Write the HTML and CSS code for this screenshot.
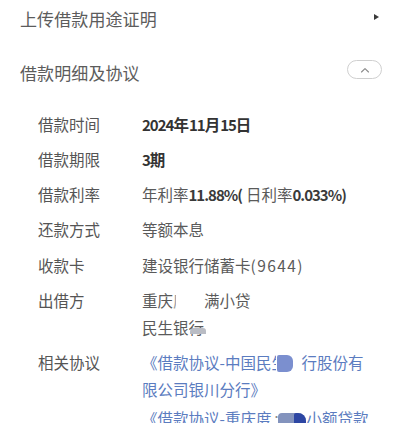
FILE: index.html
```html
<!DOCTYPE html>
<html lang="zh-CN">
<head>
<meta charset="utf-8">
<link rel="stylesheet" href="styles.css">
</head>
<body>
<div class="page">
  <div class="head-row">
    <span class="head-title">上传借款用途证明</span>
    <span class="tri"></span>
  </div>
  <div class="head-row second">
    <span class="head-title">借款明细及协议</span>
    <span class="pill">
      <svg width="10" height="6" viewBox="0 0 10 6"><path d="M1.5 5 L5 1.6 L8.5 5" fill="none" stroke="#8a8a8a" stroke-width="1.1" stroke-linecap="round" stroke-linejoin="round"/></svg>
    </span>
  </div>
  <div class="details">
    <div class="label">借款时间</div>
    <div class="value strong"><span class="num">2024</span>年<span class="num">11</span>月<span class="num">15</span>日</div>

    <div class="label">借款期限</div>
    <div class="value strong"><span class="num">3</span>期</div>

    <div class="label">借款利率</div>
    <div class="value">年利率<b class="num">11.88%(</b><span class="sp"></span>日利率<b class="num">0.033%)</b></div>

    <div class="label">还款方式</div>
    <div class="value">等额本息</div>

    <div class="label">收款卡</div>
    <div class="value">建设银行储蓄卡<span class="wide">(9644)</span></div>

    <div class="label">出借方</div>
    <div class="value">
      <div class="line">重庆<span class="frag">度</span><span class="gap-a"></span>满小贷</div>
      <div class="line">民生银<span class="smudged">行<span class="smudge"></span></span></div>
    </div>

    <div class="label">相关协议</div>
    <div class="value link">
      <div class="line">《借款协议-中国民<span class="frag2">生</span><span class="blob-a"></span>行股份有</div>
      <div class="line">限公司银川分行》</div>
      <div class="line">《借款协议-重庆度<span class="dot">·</span><span class="blob-b"><span class="blob-b2"></span></span>小额贷款</div>
    </div>
  </div>
</div>
</body>
</html>
```

FILE: styles.css
```css
html, body {
  margin: 0;
  padding: 0;
  background: #ffffff;
}
body {
  font-family: "Noto Sans CJK SC", "Noto Sans", sans-serif;
  color: #555555;
  width: 400px;
  height: 423px;
  overflow: hidden;
}
.page {
  display: flex;
  flex-direction: column;
}
.head-row {
  height: 36px;
  display: flex;
  align-items: center;
  justify-content: space-between;
  padding: 0 21px 0 20px;
}
.head-row.second {
  margin-top: 18px;
  padding-right: 18px;
}
.head-title {
  font-size: 17px;
  color: #5c5c5c;
  letter-spacing: 0.1px;
}
.tri {
  width: 0;
  height: 0;
  border-top: 3px solid transparent;
  border-bottom: 3px solid transparent;
  border-left: 5px solid #3a3a3a;
  margin-bottom: 2px;
}
.pill {
  width: 33px;
  height: 17px;
  border: 1px solid #cfcfcf;
  border-radius: 10px;
  display: flex;
  align-items: center;
  justify-content: center;
  margin-bottom: 5px;
}
.pill svg {
  display: block;
}
.details {
  display: grid;
  grid-template-columns: 104px 1fr;
  row-gap: 8.3px;
  padding: 20.5px 0 0 38px;
  font-size: 15.5px;
  line-height: 27px;
}
.label {
  color: #555555;
}
.value {
  color: #5a5a5a;
}
.value.strong {
  color: #333333;
  font-weight: 600;
}
.num {
  font-size: 15px;
  letter-spacing: -1px;
}
.value b {
  font-weight: 600;
  color: #3a3a3a;
}
.sp {
  display: inline-block;
  width: 4px;
}
.wide {
  letter-spacing: 1.4px;
}
.line {
  white-space: nowrap;
}
.frag {
  display: inline-block;
  width: 3px;
  overflow: hidden;
  vertical-align: top;
  color: #9a9a9a;
}
.gap-a {
  display: inline-block;
  width: 28px;
}
.smudged {
  position: relative;
}
.smudge {
  position: absolute;
  left: 1px;
  right: -2px;
  bottom: 4px;
  height: 6px;
  background: #b9bcc4;
  border-radius: 4px 3px 0 0;
}
.link {
  color: #5b7cc0;
}
.frag2 {
  display: inline-block;
  width: 5px;
  overflow: hidden;
  vertical-align: top;
}
.blob-a {
  display: inline-block;
  width: 16px;
  height: 17px;
  margin: 0 8px 0 1px;
  background: #7b8fcf;
  border-radius: 2px 6px 6px 2px;
  vertical-align: -3px;
}
.dot {
  display: inline-block;
  width: 7px;
  color: #8a8a8a;
  font-size: 10px;
  vertical-align: 4px;
}
.blob-b {
  display: inline-block;
  position: relative;
  width: 28px;
  height: 17px;
  background: #8393bd;
  border-radius: 4px 8px 0 4px;
  vertical-align: -5px;
}
.blob-b2 {
  position: absolute;
  right: 0;
  top: 0;
  width: 12px;
  height: 17px;
  background: #2d46a3;
  border-radius: 2px 8px 0 0;
}
```
